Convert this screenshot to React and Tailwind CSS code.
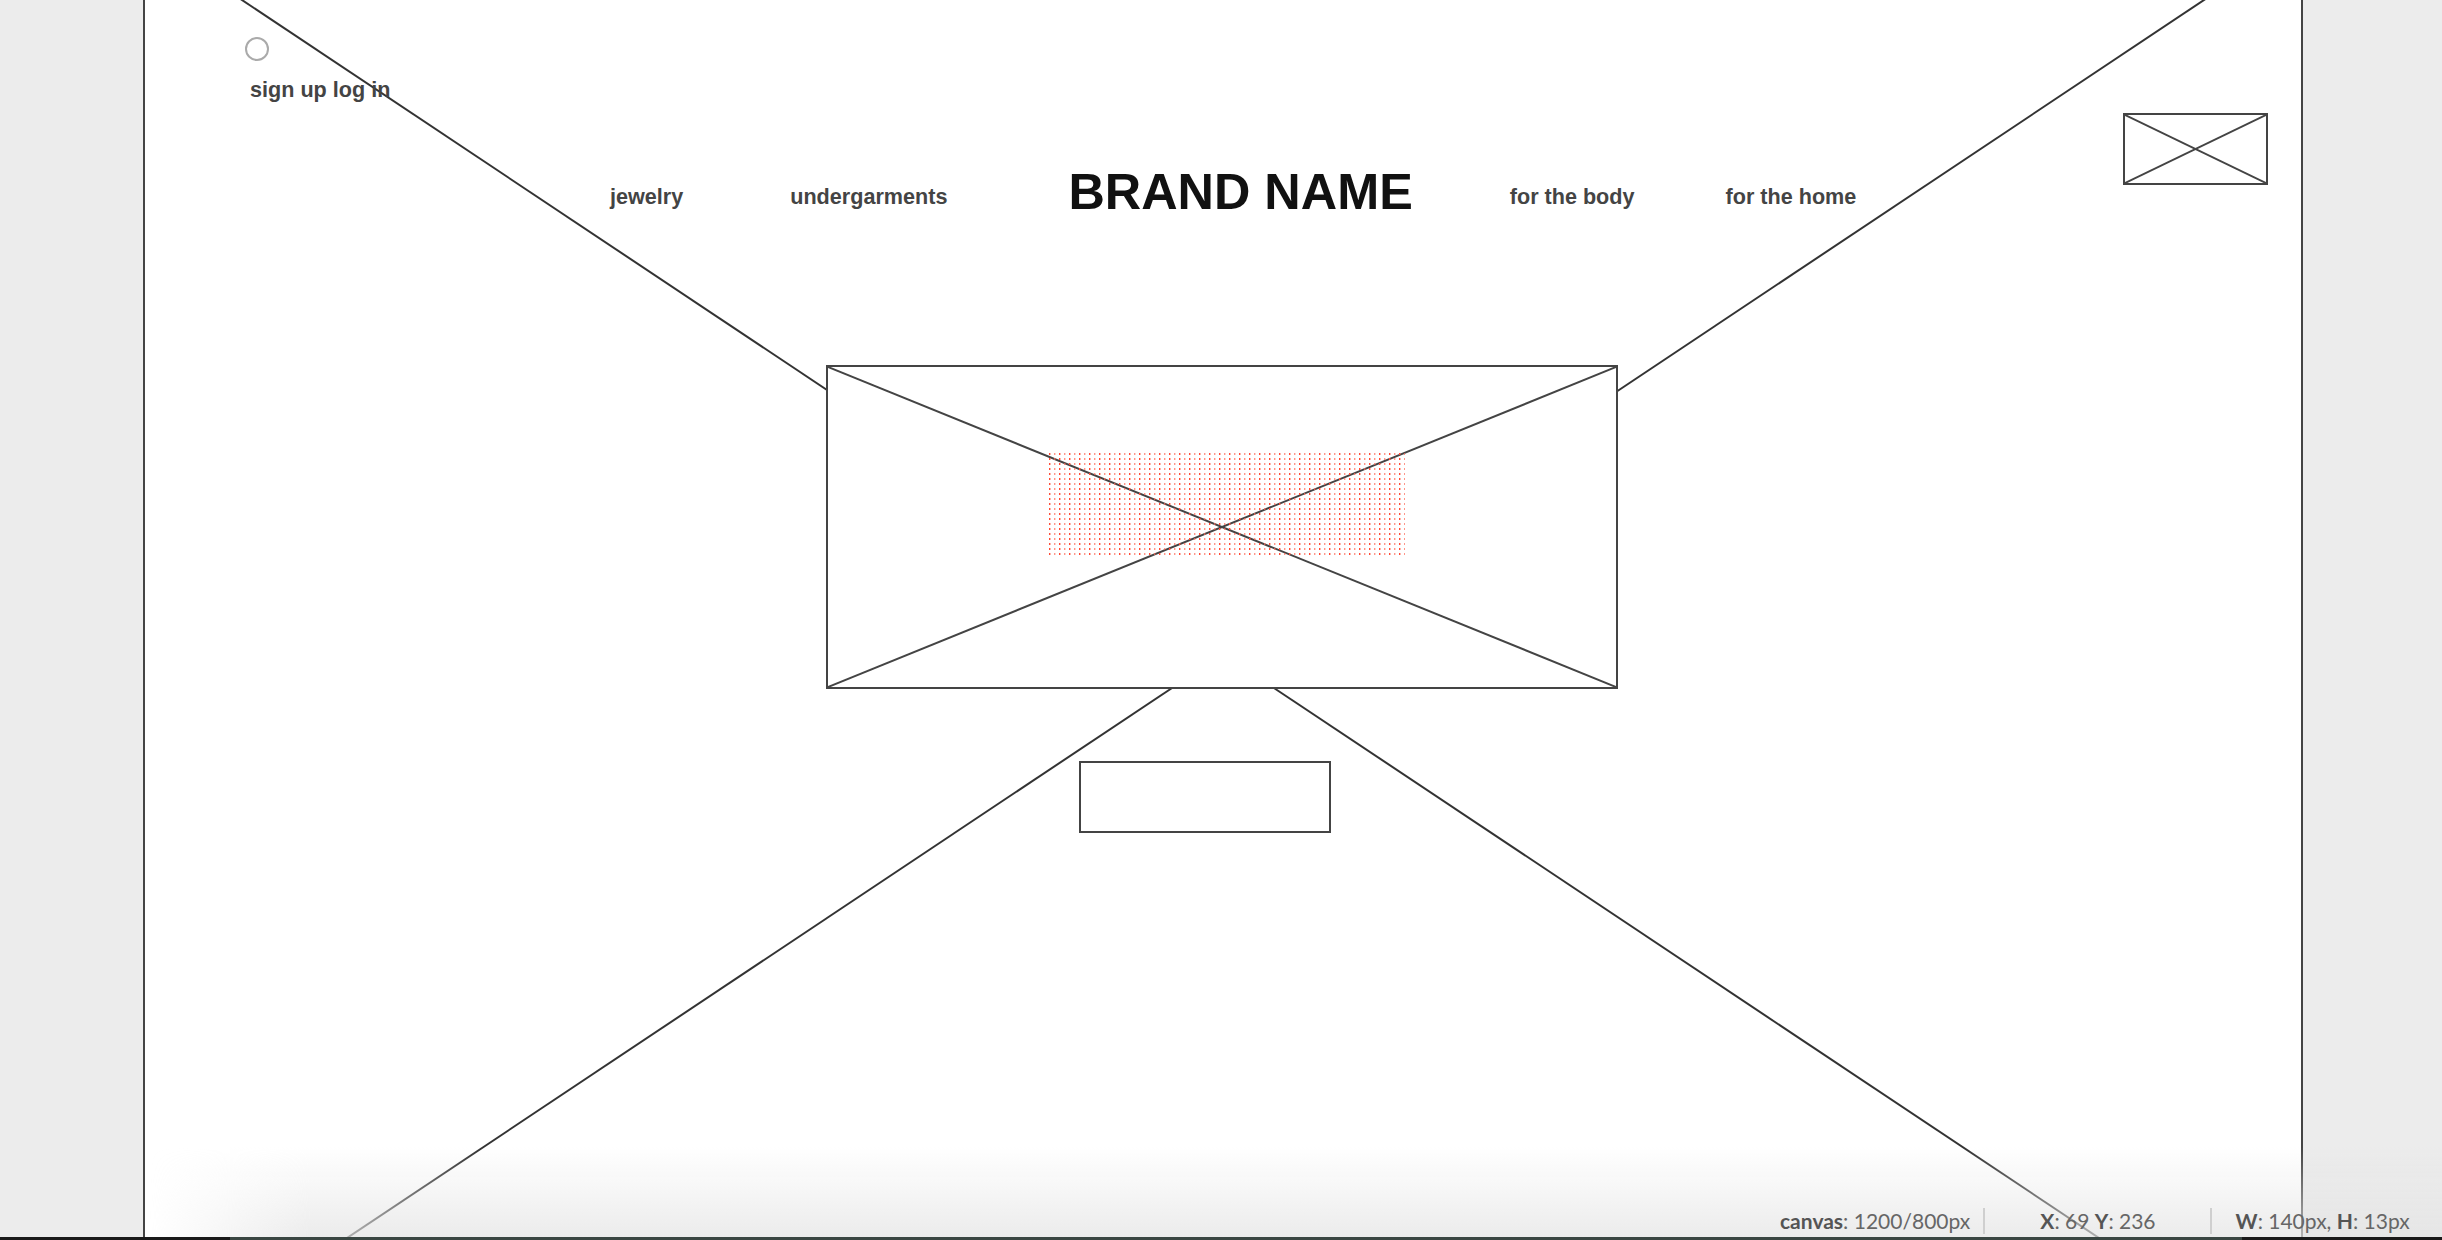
import React from "react";

function XLines({ stroke = "#444", width = 2 }) {
  return (
    <svg className="absolute inset-0 w-full h-full" viewBox="0 0 100 100" preserveAspectRatio="none">
      <line x1="0" y1="0" x2="100" y2="100" stroke={stroke} strokeWidth={width} vectorEffect="non-scaling-stroke" />
      <line x1="100" y1="0" x2="0" y2="100" stroke={stroke} strokeWidth={width} vectorEffect="non-scaling-stroke" />
    </svg>
  );
}

function Dots() {
  return (
    <svg className="absolute left-[220px] top-[85px] w-[357px] h-[105px]" width="357" height="105">
      <defs>
        <pattern id="dotpat" x="0" y="0" width="10" height="5" patternUnits="userSpaceOnUse">
          <rect x="1" y="1" width="1.4" height="2" fill="#ff4a36" opacity="1" />
          <rect x="6" y="1" width="1.4" height="2" fill="#ff6a58" opacity="0.7" />
        </pattern>
      </defs>
      <rect x="0" y="0" width="357" height="105" fill="url(#dotpat)" />
    </svg>
  );
}

export default function App() {
  return (
    <div className="relative w-[2442px] h-[1240px] overflow-hidden bg-[#ececec] font-['Liberation_Sans',Arial,sans-serif]">
      {/* canvas */}
      <div className="relative ml-[143px] w-[2160px] h-[1240px] bg-white border-x-2 border-[#444]">
        {/* background image placeholder */}
        <svg
          className="absolute left-[-2px] top-[-66px] w-[2160px] h-[1440px]"
          viewBox="0 0 2160 1440"
          width="2160"
          height="1440"
        >
          <line x1="0" y1="0" x2="2160" y2="1440" stroke="#333" strokeWidth="2" />
          <line x1="2160" y1="0" x2="0" y2="1440" stroke="#333" strokeWidth="2" />
        </svg>

        <div className="relative flex flex-col">
          {/* top section */}
          <div className="flex items-start">
            <div className="flex-1 flex flex-col pl-[100px] pt-[37px]">
              <div className="w-[24px] h-[24px] rounded-full border-2 border-[#aaa] bg-white" />
              <div className="mt-[16px] ml-[5px] text-[21.6px] leading-[25px] font-bold text-[#444]">
                sign up log in
              </div>
              <nav className="mt-[65px] ml-[365px] flex items-start whitespace-nowrap">
                <span className="mt-[17px] text-[21.6px] leading-[25px] font-bold text-[#444]">jewelry</span>
                <span className="ml-[107px] mt-[17px] text-[21.6px] leading-[25px] font-bold text-[#444]">undergarments</span>
                <span className="ml-[121px] text-[50.4px] leading-[50px] font-bold text-[#111]">BRAND NAME</span>
                <span className="ml-[97px] mt-[17px] text-[21.6px] leading-[25px] font-bold text-[#444]">for the body</span>
                <span className="ml-[91px] mt-[17px] text-[21.6px] leading-[25px] font-bold text-[#444]">for the home</span>
              </nav>
            </div>
            <div className="relative mt-[113px] mr-[33px] w-[145px] h-[72px] border-2 border-[#444] bg-white">
              <XLines />
            </div>
          </div>

          {/* hero image */}
          <div className="relative mt-[148px] ml-[681px] w-[792px] h-[324px] border-2 border-[#444] bg-white">
            <XLines />
            <Dots />
          </div>

          {/* button */}
          <div className="mt-[72px] ml-[934px] w-[252px] h-[72px] border-2 border-[#444] bg-white" />
        </div>
      </div>

      {/* status bar overlay */}
      <div className="absolute left-[150px] right-0 bottom-[3px] h-[90px] bg-gradient-to-b from-white/0 to-[#e4e4e4]/70 [mask-image:linear-gradient(to_right,transparent,black_160px)]" />
      <div className="absolute left-0 right-0 bottom-[3px] h-[90px] flex items-end pb-[1px] font-['Lato',sans-serif] text-[21px] leading-[30px] text-[#666] whitespace-nowrap">
        <div className="ml-[1780px] flex items-center">
          <span><span className="font-bold text-[#555]">canvas</span>: 1200/800px</span>
          <span className="ml-[13px] w-[2px] h-[26px] bg-[#cfcfcf]" />
          <span className="ml-[55px]"><span className="font-bold text-[#555]">X</span>: 69 <span className="font-bold text-[#555]">Y</span>: 236</span>
          <span className="ml-[54px] w-[2px] h-[26px] bg-[#cfcfcf]" />
          <span className="ml-[24px]"><span className="font-bold text-[#555]">W</span>: 140px, <span className="font-bold text-[#555]">H</span>: 13px</span>
        </div>
      </div>
      <div className="absolute left-0 right-0 bottom-0 h-[3px] flex">
        <div className="w-[230px] bg-[#1a1a1a]" />
        <div className="flex-1 bg-[#3a4642]" />
        <div className="w-[200px] bg-[#1a1a1a]" />
      </div>
    </div>
  );
}
